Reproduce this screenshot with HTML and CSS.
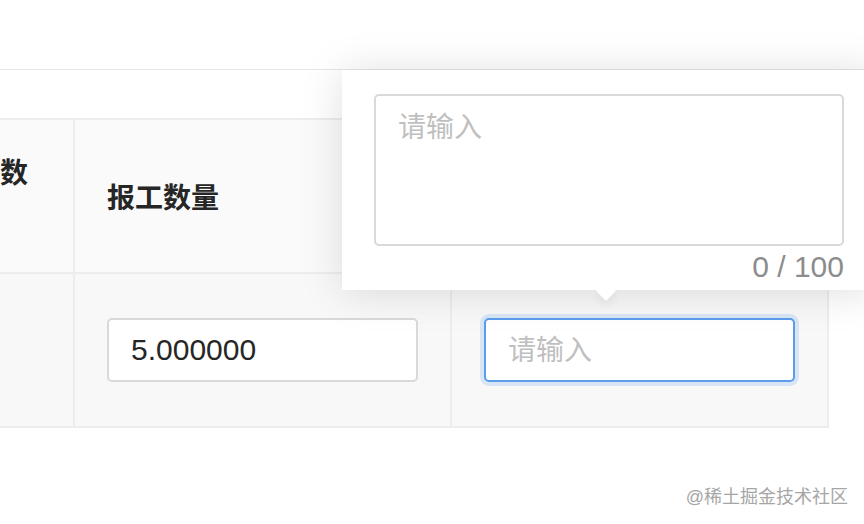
FILE: index.html
```html
<!DOCTYPE html>
<html lang="zh-CN">
<head>
    <meta charset="UTF-8">
    <meta name="viewport" content="width=device-width, initial-scale=1.0">
    <title>报工</title>
    <link rel="stylesheet" href="styles.css">
</head>
<body>
    <div class="page-head"></div>
    <div class="toolbar"></div>

    <table class="report-table">
        <thead>
            <tr>
                <th class="col-first"><span class="first-title">计划数</span></th>
                <th>报工数量</th>
                <th></th>
            </tr>
        </thead>
        <tbody>
            <tr>
                <td class="col-first"></td>
                <td><input type="text" class="field" value="5.000000"></td>
                <td><input type="text" class="field focused" placeholder="请输入"></td>
            </tr>
        </tbody>
    </table>

    <div class="popover">
        <textarea class="remark" placeholder="请输入"></textarea>
        <div class="count">0 / 100</div>
        <span class="arrow"></span>
    </div>

    <div class="watermark">@稀土掘金技术社区</div>
</body>
</html>
```

FILE: styles.css
```css
body {
    margin: 0;
    width: 864px;
    height: 524px;
    overflow: hidden;
    position: relative;
    background-color: #fff;
    color: #262626;
    font-family: "Liberation Sans", "Noto Sans CJK SC", sans-serif;
}
.page-head {
    height: 69px;
    border-bottom: 1px solid #e6e6e6;
}
.toolbar {
    height: 48px;
}
.report-table {
    margin-left: -66px;
    border-collapse: collapse;
    table-layout: fixed;
    width: 889px;
}
.report-table th,
.report-table td {
    border: 2px solid #ededed;
    height: 152px;
    padding: 0 0 0 32px;
    text-align: left;
    vertical-align: middle;
    width: 343px;
}
.report-table .col-first {
    width: 129px;
    padding-left: 10px;
    border-left: none;
}
.report-table th {
    background-color: #fafafa;
    font-size: 28px;
    font-weight: 700;
    color: #262626;
}
.report-table td {
    background-color: #f8f8f8;
}
.first-title {
    display: block;
    margin-bottom: 50px;
}
.field {
    box-sizing: border-box;
    width: 311px;
    height: 64px;
    border: 2px solid #d9d9d9;
    border-radius: 5px;
    padding: 0 22px;
    font-family: inherit;
    font-size: 30px;
    color: #262626;
    background-color: #fff;
    outline: none;
}
.field::placeholder,
.remark::placeholder {
    color: #bfbfbf;
    font-size: 28px;
}
.field.focused {
    border-color: #5b9deb;
    box-shadow: 0 0 0 4px rgba(91, 157, 235, 0.2);
}
.popover {
    position: absolute;
    left: 342px;
    top: 70px;
    width: 534px;
    box-sizing: border-box;
    padding: 24px 32px 2px;
    background-color: #fff;
    box-shadow: 0 2px 40px rgba(0, 0, 0, 0.13);
}
.remark {
    display: block;
    box-sizing: border-box;
    width: 470px;
    height: 152px;
    border: 2px solid #d9d9d9;
    border-radius: 5px;
    padding: 9px 22px;
    font-family: inherit;
    font-size: 28px;
    resize: none;
    outline: none;
}
.count {
    text-align: right;
    font-size: 30px;
    line-height: 42px;
    color: #8c8c8c;
}
.arrow {
    position: absolute;
    left: 257px;
    bottom: -8px;
    width: 14px;
    height: 14px;
    background-color: #fff;
    transform: rotate(45deg);
    box-shadow: 4px 4px 8px rgba(0, 0, 0, 0.06);
}
.watermark {
    position: absolute;
    right: 16px;
    bottom: 16px;
    font-size: 18px;
    color: #a6a6a6;
}
```
